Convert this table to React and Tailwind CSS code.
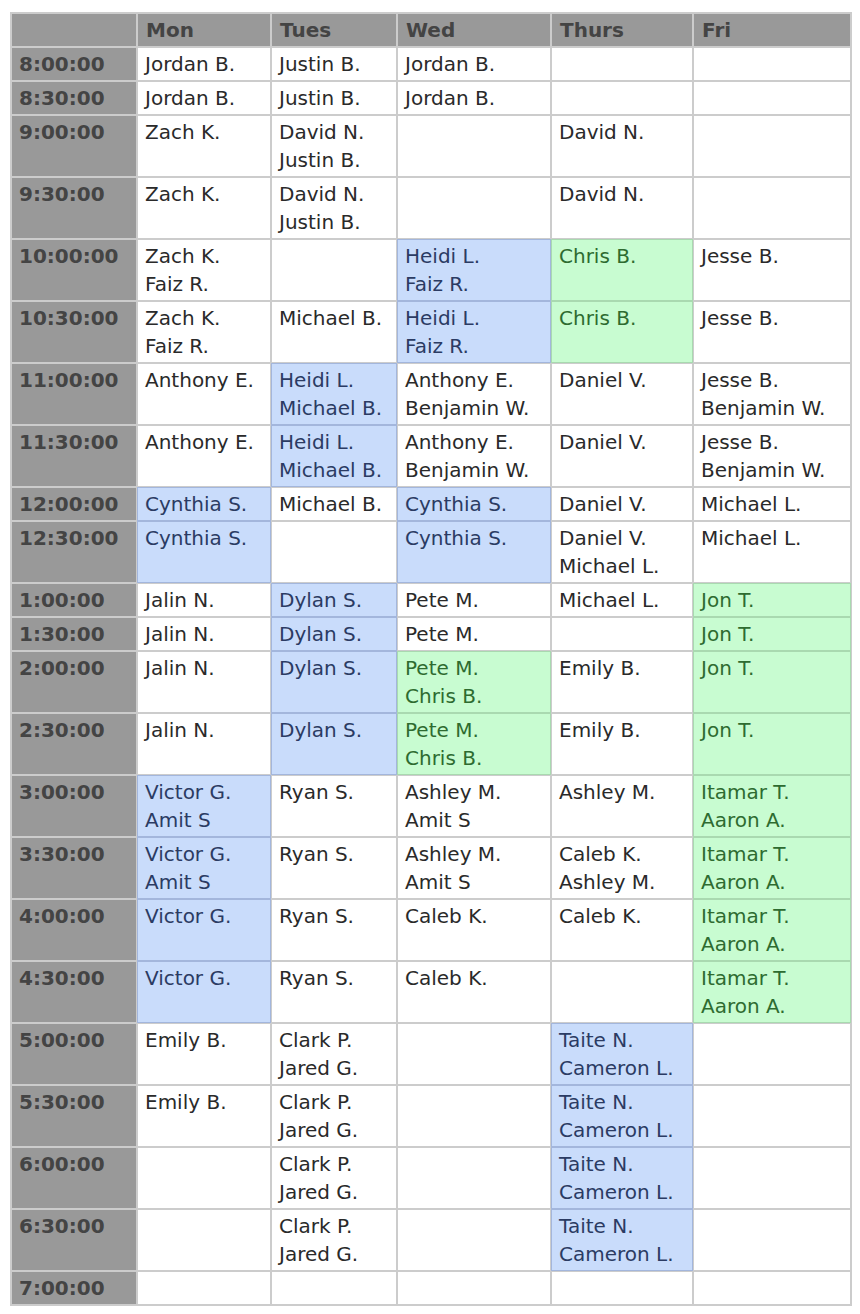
import React from "react";

const rows = [
  ["8:00:00", [["Jordan B."]], [["Justin B."]], [["Jordan B."]], [[]], [[]]],
  ["8:30:00", [["Jordan B."]], [["Justin B."]], [["Jordan B."]], [[]], [[]]],
  ["9:00:00", [["Zach K."]], [["David N.", "Justin B."]], [[]], [["David N."]], [[]]],
  ["9:30:00", [["Zach K."]], [["David N.", "Justin B."]], [[]], [["David N."]], [[]]],
  ["10:00:00", [["Zach K.", "Faiz R."]], [[]], [["Heidi L.", "Faiz R."], "b"], [["Chris B."], "g"], [["Jesse B."]]],
  ["10:30:00", [["Zach K.", "Faiz R."]], [["Michael B."]], [["Heidi L.", "Faiz R."], "b"], [["Chris B."], "g"], [["Jesse B."]]],
  ["11:00:00", [["Anthony E."]], [["Heidi L.", "Michael B."], "b"], [["Anthony E.", "Benjamin W."]], [["Daniel V."]], [["Jesse B.", "Benjamin W."]]],
  ["11:30:00", [["Anthony E."]], [["Heidi L.", "Michael B."], "b"], [["Anthony E.", "Benjamin W."]], [["Daniel V."]], [["Jesse B.", "Benjamin W."]]],
  ["12:00:00", [["Cynthia S."], "b"], [["Michael B."]], [["Cynthia S."], "b"], [["Daniel V."]], [["Michael L."]]],
  ["12:30:00", [["Cynthia S."], "b"], [[]], [["Cynthia S."], "b"], [["Daniel V.", "Michael L."]], [["Michael L."]]],
  ["1:00:00", [["Jalin N."]], [["Dylan S."], "b"], [["Pete M."]], [["Michael L."]], [["Jon T."], "g"]],
  ["1:30:00", [["Jalin N."]], [["Dylan S."], "b"], [["Pete M."]], [[]], [["Jon T."], "g"]],
  ["2:00:00", [["Jalin N."]], [["Dylan S."], "b"], [["Pete M.", "Chris B."], "g"], [["Emily B."]], [["Jon T."], "g"]],
  ["2:30:00", [["Jalin N."]], [["Dylan S."], "b"], [["Pete M.", "Chris B."], "g"], [["Emily B."]], [["Jon T."], "g"]],
  ["3:00:00", [["Victor G.", "Amit S"], "b"], [["Ryan S."]], [["Ashley M.", "Amit S"]], [["Ashley M."]], [["Itamar T.", "Aaron A."], "g"]],
  ["3:30:00", [["Victor G.", "Amit S"], "b"], [["Ryan S."]], [["Ashley M.", "Amit S"]], [["Caleb K.", "Ashley M."]], [["Itamar T.", "Aaron A."], "g"]],
  ["4:00:00", [["Victor G."], "b"], [["Ryan S."]], [["Caleb K."]], [["Caleb K."]], [["Itamar T.", "Aaron A."], "g"]],
  ["4:30:00", [["Victor G."], "b"], [["Ryan S."]], [["Caleb K."]], [[]], [["Itamar T.", "Aaron A."], "g"]],
  ["5:00:00", [["Emily B."]], [["Clark P.", "Jared G."]], [[]], [["Taite N.", "Cameron L."], "b"], [[]]],
  ["5:30:00", [["Emily B."]], [["Clark P.", "Jared G."]], [[]], [["Taite N.", "Cameron L."], "b"], [[]]],
  ["6:00:00", [[]], [["Clark P.", "Jared G."]], [[]], [["Taite N.", "Cameron L."], "b"], [[]]],
  ["6:30:00", [[]], [["Clark P.", "Jared G."]], [[]], [["Taite N.", "Cameron L."], "b"], [[]]],
  ["7:00:00", [[]], [[]], [[]], [[]], [[]]],
];

const headers = ["Mon", "Tues", "Wed", "Thurs", "Fri"];
const widths = ["w-[134px]", "w-[126px]", "w-[154px]", "w-[142px]", "w-[158px]"];

function Cell({ names, kind }) {
  let cls = "border border-[#cccccc] bg-white text-[#2a2a2a]";
  if (kind === "b") cls = "border border-[#a3b6dc] bg-[#c9dcfb] text-[#2b3b63]";
  if (kind === "g") cls = "border border-[#a9d9b0] bg-[#c8fcd1] text-[#2e6b30]";
  return (
    <td className={`${cls} align-top px-[7px] py-[2px] leading-[28px] whitespace-nowrap`}>
      {names.map((n, i) => (
        <div key={i}>{n}</div>
      ))}
    </td>
  );
}

export default function App() {
  return (
    <div className="bg-white min-h-[1314px] pl-[10px] pt-[12px] font-['DejaVu_Sans',sans-serif] text-[20px]">
      <table className="table-fixed border-separate border-spacing-0 border border-[#cccccc] w-[842px]">
        <thead>
          <tr>
            <th className="w-[126px] border border-[#cccccc] bg-[#999999] py-[2px] leading-[28px]"></th>
            {headers.map((h, i) => (
              <th
                key={h}
                className={`${widths[i]} border border-[#cccccc] bg-[#999999] text-[#444444] font-bold text-left px-[8px] py-[2px] leading-[28px]`}
              >
                {h}
              </th>
            ))}
          </tr>
        </thead>
        <tbody>
          {rows.map((r) => (
            <tr key={r[0]}>
              <td className="border border-[#cccccc] bg-[#999999] text-[#444444] font-bold align-top px-[7px] py-[2px] leading-[28px]">
                {r[0]}
              </td>
              {r.slice(1).map((c, i) => (
                <Cell key={i} names={c[0]} kind={c[1]} />
              ))}
            </tr>
          ))}
        </tbody>
      </table>
    </div>
  );
}
